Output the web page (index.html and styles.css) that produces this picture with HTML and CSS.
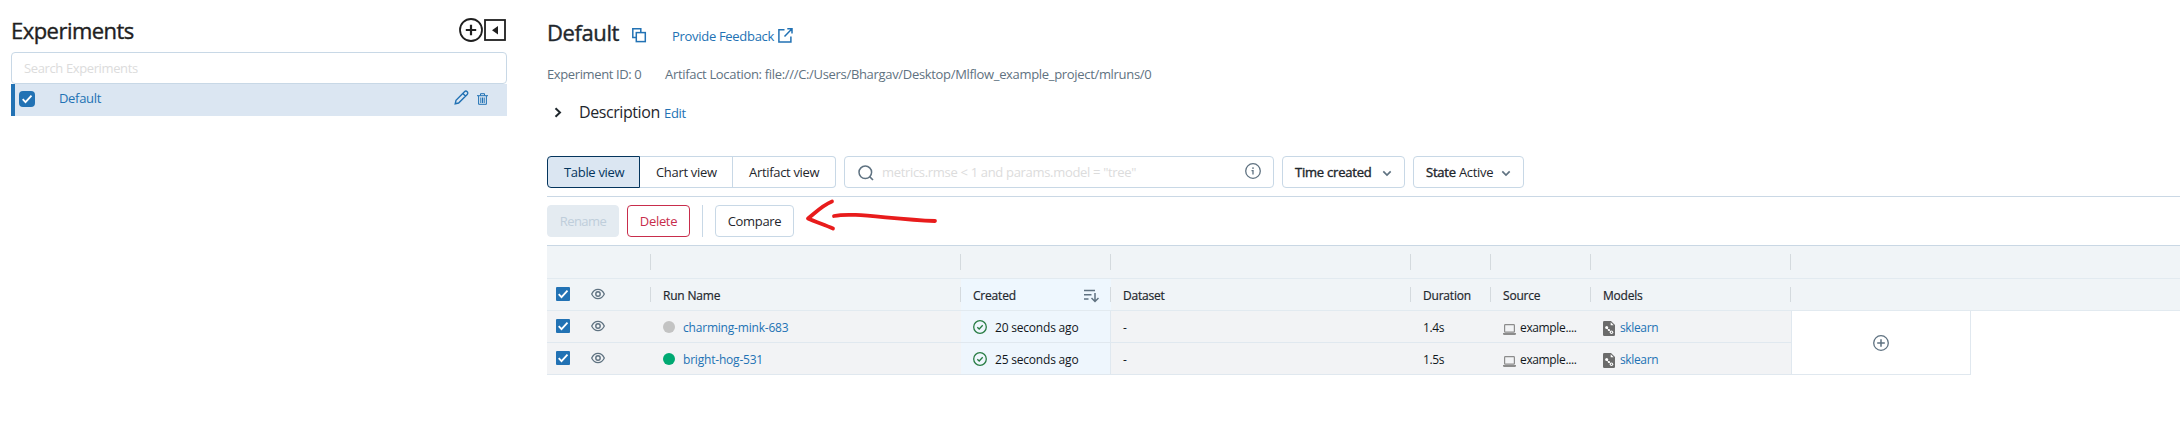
FILE: index.html
```html
<!DOCTYPE html>
<html lang="en">
<head>
<meta charset="utf-8">
<title>Experiments</title>
<link rel="stylesheet" href="styles.css">
</head>
<body>
<svg class="defs" width="0" height="0" aria-hidden="true">
  <symbol id="eye" viewBox="0 0 14 12"><path d="M.7 6C2 3.200 4.300 1.300 7 1.300S12 3.200 13.300 6C12 8.800 9.700 10.700 7 10.700S2 8.800.7 6z" fill="none" stroke="currentColor" stroke-width="1.300"/><circle cx="7" cy="6" r="2.200" fill="none" stroke="currentColor" stroke-width="1.400"/></symbol>
  <symbol id="ok" viewBox="0 0 14 14"><circle cx="7" cy="7" r="6.300" fill="none" stroke="currentColor" stroke-width="1.300"/><path d="M4.300 7.200l1.900 1.800 3.500-3.700" fill="none" stroke="currentColor" stroke-width="1.300"/></symbol>
  <symbol id="laptop" viewBox="0 0 13 11"><rect x="1.600" y=".6" width="9.800" height="7.600" rx=".8" fill="none" stroke="currentColor" stroke-width="1.200"/><path d="M0 9h13v.8q0 1.200-1.200 1.200H1.200Q0 11 0 9.800z" fill="currentColor"/></symbol>
  <symbol id="model" viewBox="0 0 12 15"><path d="M1.300 0H8l4 4v9.700q0 1.300-1.300 1.300H1.300Q0 15 0 13.700V1.300Q0 0 1.300 0z" fill="currentColor"/><path d="M7.700 1.300v3h3z" fill="#fff"/><path d="M3.500 6.200l2.200 3L8.500 11" stroke="#fff" stroke-width=".9" fill="none"/><circle cx="3.700" cy="6.400" r="1.500" fill="#fff"/><circle cx="5.900" cy="9" r="1.100" fill="#fff"/><circle cx="8.500" cy="11.200" r="1.700" fill="#fff"/><circle cx="8.500" cy="11.200" r=".7" fill="currentColor"/></symbol>
  <symbol id="check" viewBox="0 0 14 14"><path d="M2.700 7.200l2.800 2.900 6-6.500" fill="none" stroke="#fff" stroke-width="1.800"/></symbol>
  <symbol id="chev" viewBox="0 0 10 7"><path d="M1.300 1.400L5 5l3.700-3.600" fill="none" stroke="currentColor" stroke-width="1.700"/></symbol>
</svg>

<div class="app">
  <aside class="sidebar">
    <div class="side-head">
      <h2>Experiments</h2>
      <svg class="plus" width="24" height="24" viewBox="0 0 24 24"><circle cx="12" cy="12" r="11" fill="none" stroke="currentColor" stroke-width="1.800"/><path d="M12 6.800v10.400M6.800 12h10.400" stroke="currentColor" stroke-width="2.200"/></svg>
      <svg class="collapse" width="22" height="22" viewBox="0 0 22 22"><rect x="1" y="1" width="20" height="20" fill="none" stroke="currentColor" stroke-width="1.800"/><path d="M14 7v8.600L8 11.300z" fill="currentColor"/></svg>
    </div>
    <div class="side-search">Search Experiments</div>
    <div class="exp">
      <span class="exp-box"><svg width="14" height="14"><use href="#check"/></svg></span>
      <span class="exp-name">Default</span>
      <svg class="pencil" width="15" height="15" viewBox="0 0 15 15"><path d="M1.200 13.800l.8-3.500L10.500 1.700a1.600 1.600 0 0 1 2.700 2.700L4.600 13zM8.800 3.400l2.700 2.700" fill="none" stroke="currentColor" stroke-width="1.400"/></svg>
      <svg class="trash" width="11" height="12" viewBox="0 0 11 12"><path d="M0 2.700h11M3.500 2.500V.7h4v1.800M1.600 3v8.300h7.800V3M3.800 4.500v5.500M5.500 4.500v5.500M7.200 4.500v5.500" fill="none" stroke="currentColor" stroke-width="1"/></svg>
    </div>
  </aside>

  <main class="main">
    <div class="title-row">
      <h1>Default</h1>
      <svg class="copy" width="16" height="15" viewBox="0 0 16 15"><path d="M5 9.500H1.800V.8h8v3.500" fill="none" stroke="currentColor" stroke-width="1.500"/><rect x="5.300" y="4.600" width="9" height="9" fill="none" stroke="currentColor" stroke-width="1.500"/></svg>
      <a class="feedback">Provide Feedback</a>
      <svg class="ext" width="15" height="15" viewBox="0 0 15 15"><path d="M6.500 1.700H.9V14h12V8.500M9.300.8H14v4.700M14 .8L6.500 8.500" fill="none" stroke="currentColor" stroke-width="1.500"/></svg>
    </div>
    <div class="meta"><span>Experiment ID: 0</span><span>Artifact Location: file:///C:/Users/Bhargav/Desktop/Mlflow_example_project/mlruns/0</span></div>
    <div class="desc">
      <svg width="8" height="11" viewBox="0 0 8 11"><path d="M1.500 1.200L6 5.500 1.500 9.800" fill="none" stroke="currentColor" stroke-width="2"/></svg>
      <span class="desc-label">Description</span><a>Edit</a>
    </div>

    <div class="filters">
      <div class="tabs"><span class="tab active">Table view</span><span class="tab">Chart view</span><span class="tab last">Artifact view</span></div>
      <div class="query">
        <svg width="16" height="16" viewBox="0 0 16 16"><circle cx="7.300" cy="7.300" r="6.300" fill="none" stroke="currentColor" stroke-width="1.500"/><path d="M11.600 11.600l3.400 3.400" stroke="currentColor" stroke-width="1.600"/></svg>
        <span>metrics.rmse &lt; 1 and params.model = "tree"</span>
        <svg class="info" width="16" height="16" viewBox="0 0 16 16"><circle cx="8" cy="8" r="7.300" fill="none" stroke="currentColor" stroke-width="1.300"/><path d="M6.500 7.600H8v3.900M8 4.200v1.700" fill="none" stroke="currentColor" stroke-width="1.300"/></svg>
      </div>
      <div class="select time"><b>Time created</b><svg width="10" height="7"><use href="#chev"/></svg></div>
      <div class="select state"><span><b>State</b> Active</span><svg width="10" height="7"><use href="#chev"/></svg></div>
    </div>

    <div class="actions">
      <span class="btn rename">Rename</span>
      <span class="btn delete">Delete</span>
      <span class="divider"></span>
      <span class="btn compare">Compare</span>
      <svg class="arrow" width="140" height="40" viewBox="0 0 140 40"><path d="M29 5.500C20 9 13 16 5 22.500C13 26 22 29 30 32.500M31 20C50 16 85 23 132 25" fill="none" stroke="#e81c1c" stroke-width="3.800" stroke-linecap="round" stroke-linejoin="round"/></svg>
    </div>

    <div class="table">
      <div class="row group"><i></i><i></i><i></i><i></i><i></i><i></i><i></i></div>
      <div class="row head">
        <div class="tick"><span class="box"><svg width="14" height="14"><use href="#check"/></svg></span><svg class="eye" width="14" height="12"><use href="#eye"/></svg></div>
        <div>Run Name</div>
        <div class="sorted">Created<svg class="sort" width="15" height="14" viewBox="0 0 15 14"><path d="M0 1.500h11M0 5.800h7.500M0 10h4.500M11 4v8.500M7.500 9l3.500 3.500L14.500 9" fill="none" stroke="currentColor" stroke-width="1.500"/></svg></div>
        <div>Dataset</div><div>Duration</div><div>Source</div><div>Models</div>
      </div>
      <div class="body">
        <div class="runs">
          <div class="row run">
            <div class="tick"><span class="box"><svg width="14" height="14"><use href="#check"/></svg></span><svg class="eye" width="14" height="12"><use href="#eye"/></svg></div>
            <div><span class="dot grey"></span><a class="name">charming-mink-683</a></div>
            <div class="created"><svg class="ok" width="14" height="14"><use href="#ok"/></svg><span>20 seconds ago</span></div>
            <div><span>-</span></div>
            <div class="tight"><span>1.4s</span></div>
            <div class="tight"><svg class="laptop" width="13" height="11"><use href="#laptop"/></svg><span>example....</span></div>
            <div class="tight"><svg class="model" width="12" height="15"><use href="#model"/></svg><a>sklearn</a></div>
          </div>
          <div class="row run">
            <div class="tick"><span class="box"><svg width="14" height="14"><use href="#check"/></svg></span><svg class="eye" width="14" height="12"><use href="#eye"/></svg></div>
            <div><span class="dot green"></span><a class="name">bright-hog-531</a></div>
            <div class="created"><svg class="ok" width="14" height="14"><use href="#ok"/></svg><span>25 seconds ago</span></div>
            <div><span>-</span></div>
            <div class="tight"><span>1.5s</span></div>
            <div class="tight"><svg class="laptop" width="13" height="11"><use href="#laptop"/></svg><span>example....</span></div>
            <div class="tight"><svg class="model" width="12" height="15"><use href="#model"/></svg><a>sklearn</a></div>
          </div>
        </div>
        <div class="add"><svg width="16" height="16" viewBox="0 0 16 16"><circle cx="8" cy="8" r="7.300" fill="none" stroke="currentColor" stroke-width="1.300"/><path d="M8 4.200v7.600M4.200 8h7.600" stroke="currentColor" stroke-width="1.500"/></svg></div>
      </div>
    </div>
  </main>
</div>
</body>
</html>
```
FILE: styles.css
```css
* { box-sizing: border-box; }
body {
  margin: 0;
  background: #fff;
  color: #1f272d;
  font: 13px/20px "Open Sans", "Noto Sans", sans-serif;
  letter-spacing: -0.32px;
  white-space: nowrap;
}
svg { display: block; flex: none; }
.defs { position: absolute; }
h1, h2 { margin: 0; font-size: 22px; line-height: 30px; font-weight: 400; -webkit-text-stroke: 0.4px currentColor; }
a { color: #2272b4; }

.app { display: flex; height: 434px; overflow: hidden; }

/* Experiment list */
.sidebar { width: 507px; padding: 15px 0 0 11px; flex: none; }
.side-head { display: flex; height: 37px; color: #1f1f1f; }
.side-head h2 { flex: 1; letter-spacing: -0.53px; }
.plus { margin: 3px 1px 0 0; }
.collapse { margin: 4px 1px 0 0; }
.side-search {
  height: 32px;
  padding: 5px 12px;
  border: 1px solid #c8d8e6;
  border-radius: 4px;
  color: #dcdcdc;
  letter-spacing: -0.38px;
}
.exp {
  display: flex;
  height: 32px;
  border-left: 4px solid #2272b4;
  background: #dbe6f2;
  color: #2272b4;
}
.exp-box {
  width: 16px;
  height: 16px;
  margin: 7px 24px 0 4px;
  padding: 1px;
  border-radius: 4px;
  background: #2272b4;
}
.exp-name { flex: 1; padding-top: 4px; }
.pencil { margin: 6px 8px 0 0; }
.trash { margin: 9px 19px 0 0; }

/* Title block */
.main { flex: 1; min-width: 0; padding: 17px 0 0 40px; }
.title-row { display: flex; height: 47px; color: #2272b4; }
.title-row h1 { width: 84px; color: #1f272d; letter-spacing: -0.4px; }
.copy { margin: 11px 25px 0 0; }
.feedback { width: 106px; padding-top: 9px; letter-spacing: -0.3px; }
.ext { margin-top: 11px; }
.meta { display: flex; gap: 24px; height: 34px; color: #5f7281; }
.meta span:first-child { width: 94px; letter-spacing: -0.38px; }
.desc { display: flex; height: 58px; padding-left: 7px; }
.desc svg { margin-top: 9px; }
.desc-label { width: 85px; margin-left: 17px; padding-top: 4px; font-size: 16px; letter-spacing: -0.42px; }
.desc a { padding-top: 5px; }

/* View switch and filters */
.filters { display: flex; gap: 8px; height: 41px; border-bottom: 1px solid #cad8e5; }
.tabs { display: flex; width: 289px; height: 32px; }
.tab {
  width: 93px;
  padding: 5px 0 0 16px;
  border: 1px solid #c8d8e6;
  border-left: 0;
}
.tab.active {
  border: 1px solid #04355d;
  border-radius: 4px 0 0 4px;
  background: #dbe6f2;
  color: #04355d;
}
.tab.last { width: 103px; border-radius: 0 4px 4px 0; }
.query {
  display: flex;
  width: 430px;
  height: 32px;
  padding: 5px 12px 0 13px;
  border: 1px solid #c8d8e6;
  border-radius: 4px;
  color: #5f7281;
}
.query svg { margin-top: 3px; }
.query span { flex: 1; margin-left: 8px; color: #dcdcdc; }
.query .info { margin-top: 1px; }
.select {
  display: flex;
  justify-content: space-between;
  height: 32px;
  padding: 5px 12px 0 12px;
  border: 1px solid #c8d8e6;
  border-radius: 4px;
}
.select b { font-weight: 400; letter-spacing: -0.22px; -webkit-text-stroke: 0.4px currentColor; }
.select svg { margin-top: 8px; color: #5f7281; }
.time { width: 123px; }
.state { width: 111px; }

/* Run actions */
.actions { position: relative; display: flex; height: 49px; padding-top: 8px; border-bottom: 1px solid #c9d7e4; }
.btn { height: 32px; padding-top: 5px; border: 1px solid #c8d8e6; border-radius: 4px; text-align: center; }
.rename { width: 72px; border-color: #e4ebf1; background: #e4ebf1; color: #bfcedb; letter-spacing: -0.55px; }
.delete { width: 63px; margin-left: 8px; border-color: #c82d4c; color: #c82d4c; }
.divider { width: 1px; height: 32px; margin: 0 12px; background: #c8d8e6; }
.compare { width: 79px; }
.arrow { position: absolute; left: 256px; top: -1px; }

/* Runs table */
.table { font-size: 12px; letter-spacing: -0.2px; }
.row { display: grid; grid-template-columns: 104px 310px 150px 300px 80px 100px 200px; }
.group, .head { background: #f0f4f7; border-bottom: 1px solid #e2eaf0; }
.group { height: 33px; padding-top: 8px; }
.group i { height: 16px; border-right: 1px solid #d4dade; }
.head { height: 32px; letter-spacing: -0.2px; -webkit-text-stroke: 0.2px currentColor; }
.head > div { position: relative; display: flex; padding: 7px 0 0 12px; }
.head > div::after {
  content: "";
  position: absolute;
  right: 0;
  top: 8px;
  width: 1px;
  height: 15px;
  background: #d4dade;
}
.head > .sorted { justify-content: space-between; padding-right: 12px; background: #eef7fe; }
.sort { margin-top: 3px; color: #5f7281; }
.body { display: flex; }
.run { height: 32px; border-bottom: 1px solid #e0e8ef; background: #f2f3f5; color: #11171c; }
.run > div { display: flex; padding: 7px 0 0 12px; }
.row > .tick { padding: 8px 0 0 9px; color: #5f7281; }
.box { width: 14px; height: 14px; border-radius: 1px; background: #2272b4; }
.eye { margin: 1px 0 0 21px; }
.dot { width: 12px; height: 12px; margin: 3px 8px 0 0; border-radius: 50%; }
.grey { background: #c3c3c3; }
.green { background: #00a972; }
.run > .created { border-right: 1px solid #e0e8ef; background: #eef6fd; }
.ok { margin: 2px 8px 0 0; color: #277c43; }
.tight { letter-spacing: -0.36px; }
.laptop { margin: 6px 4px 0 0; color: #8c8c8c; }
.model { margin: 3px 5px 0 0; color: #6b6b6b; }
.add {
  display: flex;
  align-items: center;
  justify-content: center;
  width: 180px;
  border: 1px solid #e0e8ef;
  border-top: 0;
  color: #5f7281;
}
```
